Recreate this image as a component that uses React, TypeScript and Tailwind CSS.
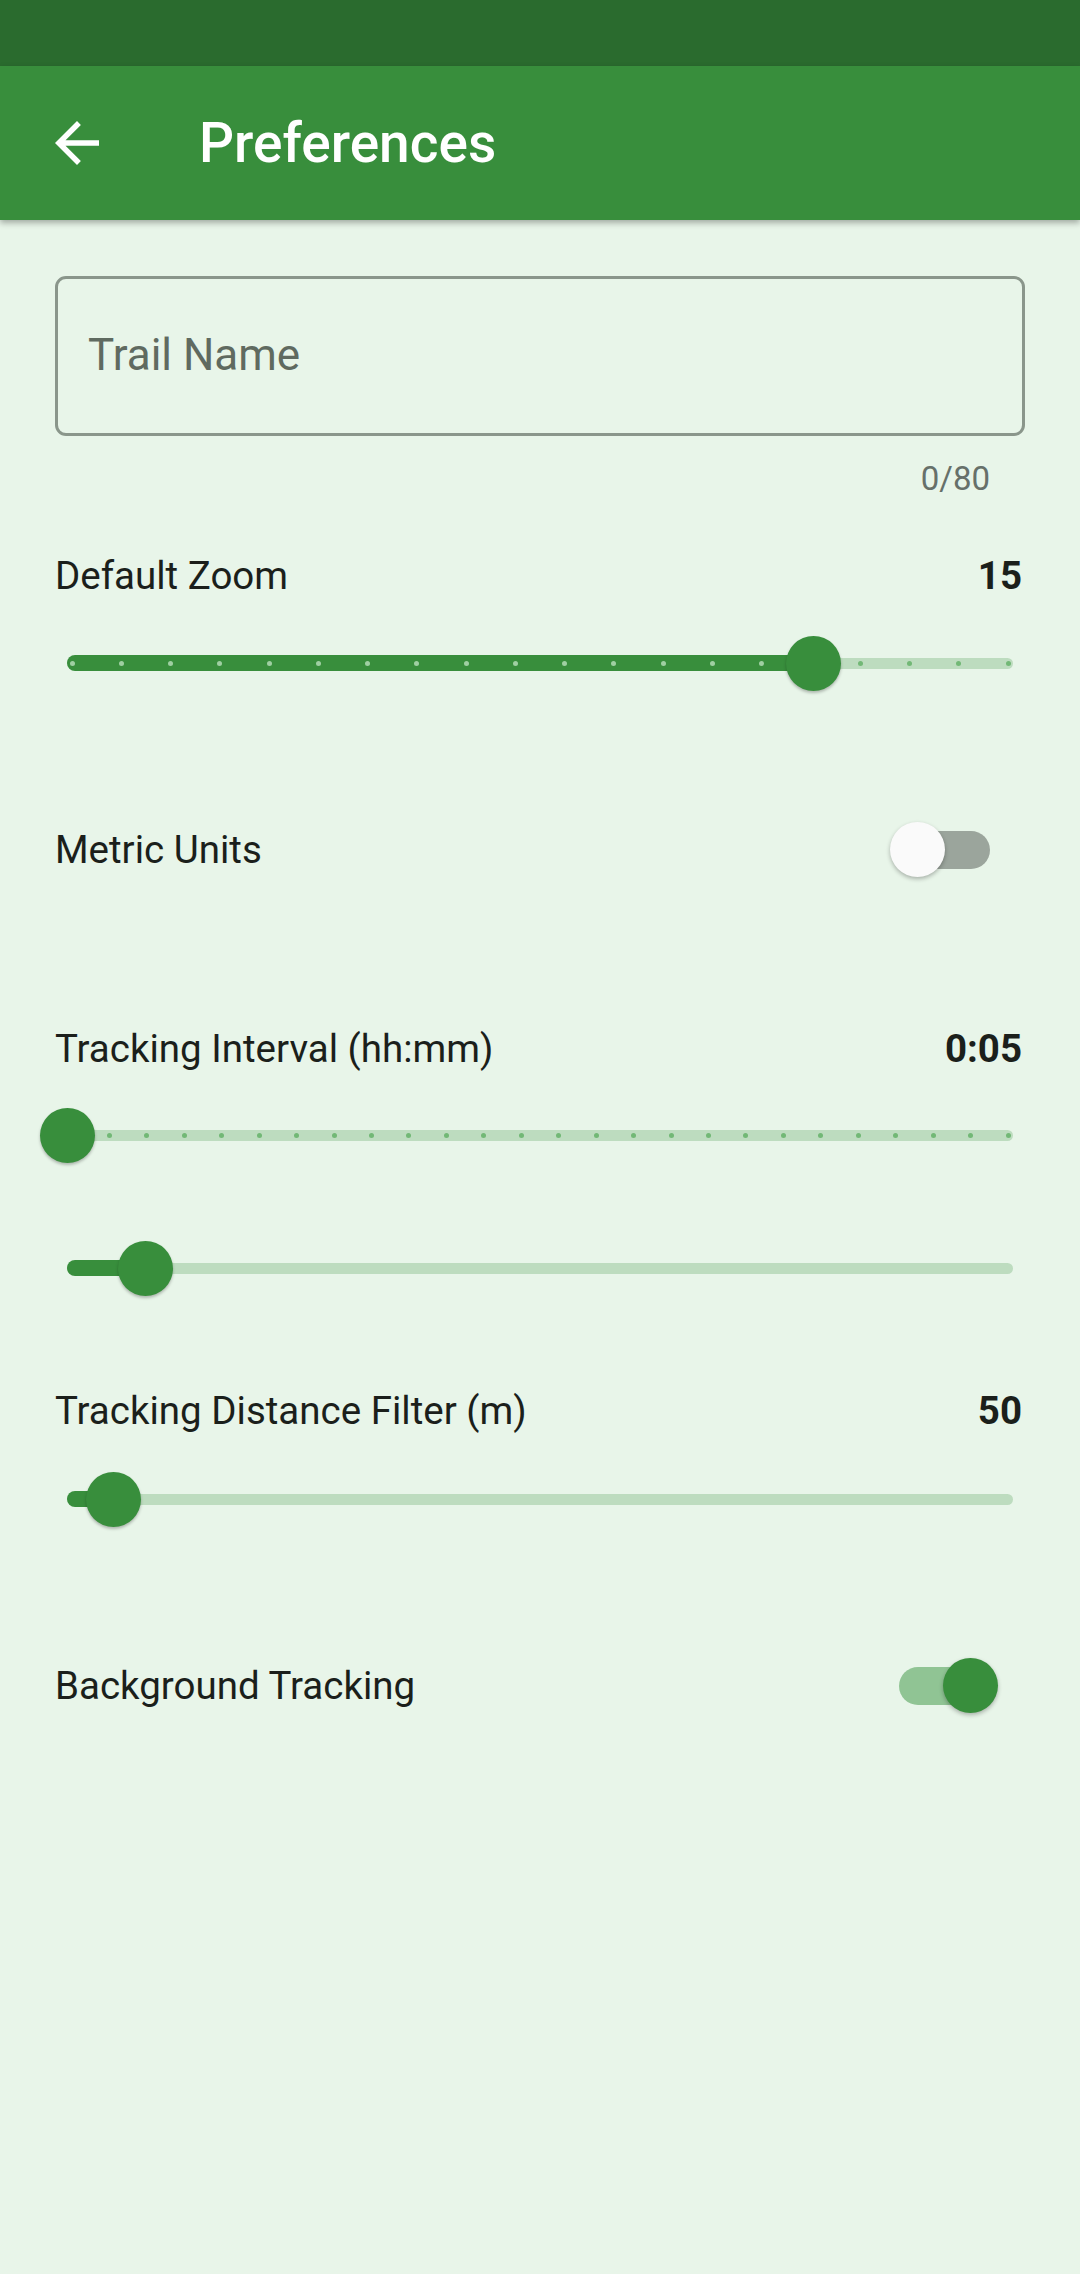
import React from "react"

const font = { fontFamily: "Roboto, 'Noto Sans', sans-serif" }

function Slider({ value, divisions }: { value: number; divisions?: number }) {
  const trackW = 945
  const x = value * trackW
  const ticks = divisions ? Array.from({ length: divisions + 1 }, (_, i) => 5 + (i * 936) / divisions) : []

  return (
    <div className="relative mx-[12px] h-[56px]">
      {/* inactive track */}
      <div className="absolute left-0 right-0 top-[22.5px] h-[11px] rounded-full bg-[#bddcbf]" />
      {/* active track */}
      {value > 0 && (
        <div
          className="absolute left-0 top-[19.75px] h-[16.5px] rounded-full bg-[#388e3c]"
          style={{ width: x + 8 }}
        />
      )}
      {ticks.map((t) => (
        <div
          key={t}
          className={
            "absolute top-[25.5px] h-[5px] w-[5px] rounded-full " +
            (t < x ? "bg-[#9fcfa2]" : "bg-[#72b876]")
          }
          style={{ left: t - 2.5 }}
        />
      ))}
      <div
        className="absolute top-[0.5px] h-[55px] w-[55px] rounded-full bg-[#388e3c] shadow-[0_2px_3px_rgba(0,0,0,0.25)]"
        style={{ left: x - 27.5 }}
      />
    </div>
  )
}

function Toggle({ on }: { on: boolean }) {
  return (
    <div className="relative h-[56px] w-[162px]">
      <div
        className={
          "absolute left-[36px] top-[9px] h-[38px] w-[91px] rounded-full " +
          (on ? "bg-[#90c494]" : "bg-[#9ba59c]")
        }
      />
      <div
        className={
          "absolute top-0 h-[55px] w-[55px] rounded-full shadow-[0_2px_4px_rgba(0,0,0,0.28)] " +
          (on ? "left-[80px] bg-[#388e3c]" : "left-[27px] bg-[#fafafa]")
        }
      />
    </div>
  )
}

function Header({ label, value, className }: { label: string; value: string; className: string }) {
  return (
    <div className={"flex h-[44px] items-center justify-between text-[38.5px] leading-[44px] text-[#1b1f1b] " + className}>
      <span>{label}</span>
      <span className="pr-[3px] font-bold">{value}</span>
    </div>
  )
}

export default function App() {
  return (
    <div className="flex min-h-[2274px] w-[1080px] flex-col bg-[#e8f5e9]" style={font}>
      <div className="h-[66px] bg-[#2a6b2e]" />
      <header className="relative z-10 flex h-[154px] items-center bg-[#388e3c] shadow-[0_3px_6px_rgba(0,0,0,0.3)]">
        <div className="ml-[44px] flex h-[66px] w-[66px] items-center justify-center">
          <svg viewBox="0 0 24 24" width="66" height="66" fill="white">
            <path d="M20 11H7.83l5.59-5.59L12 4l-8 8 8 8 1.41-1.41L7.83 13H20v-2z" />
          </svg>
        </div>
        <h1 className="ml-[89px] text-[55px] font-medium leading-none text-white">Preferences</h1>
      </header>

      <main className="flex flex-col px-[55px]">
        <div className="mt-[56px] flex h-[160px] items-center rounded-[11px] border-[3px] border-[#8a968b] px-[30px]">
          <span className="-mt-[2px] text-[44px] text-[#5f6a60]">Trail Name</span>
        </div>
        <div className="mt-[23px] flex h-[40px] items-center justify-end pr-[35px] text-[33px] leading-[40px] text-[#66706a]">
          0/80
        </div>

        <Header label="Default Zoom" value="15" className="mt-[55px]" />
        <div className="mt-[37px]">
          <Slider value={15 / 19} divisions={19} />
        </div>

        <div className="mt-[131px] flex h-[56px] items-center justify-between">
          <span className="text-[38.5px] leading-[44px] text-[#1b1f1b]">Metric Units</span>
          <Toggle on={false} />
        </div>

        <Header label="Tracking Interval (hh:mm)" value="0:05" className="mt-[149px]" />
        <div className="mt-[36px]">
          <Slider value={0} divisions={25} />
        </div>
        <div className="mt-[77px]">
          <Slider value={0.083} />
        </div>

        <Header label="Tracking Distance Filter (m)" value="50" className="mt-[93px]" />
        <div className="mt-[38px]">
          <Slider value={0.049} />
        </div>

        <div className="mt-[131px] flex h-[56px] items-center justify-between">
          <span className="text-[38.5px] leading-[44px] text-[#1b1f1b]">Background Tracking</span>
          <Toggle on={true} />
        </div>
      </main>
    </div>
  )
}
